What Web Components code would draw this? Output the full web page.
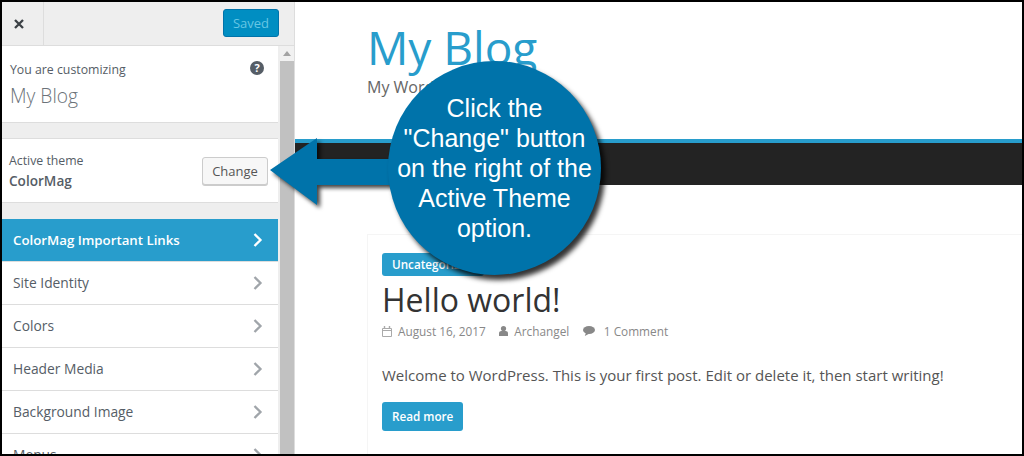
<!DOCTYPE html>
<html>
<head>
<meta charset="utf-8">
<title>Customizer</title>
<style>
  html, body { margin: 0; height: 100%; overflow: hidden; background: #000; }
  body { padding: 2px; box-sizing: border-box; font-family: "Open Sans", sans-serif; }
</style>
</head>
<body>
<customizer-frame>
  <customizer-sidebar slot="side">
    <customizer-row active>ColorMag Important Links</customizer-row>
    <customizer-row>Site Identity</customizer-row>
    <customizer-row>Colors</customizer-row>
    <customizer-row>Header Media</customizer-row>
    <customizer-row>Background Image</customizer-row>
    <customizer-row>Menus</customizer-row>
  </customizer-sidebar>
  <blog-preview slot="main"></blog-preview>
  <tutorial-callout slot="over">Click the<br>"Change" button<br>on the right of the<br>Active Theme<br>option.</tutorial-callout>
</customizer-frame>

<script>
class CustomizerFrame extends HTMLElement {
  constructor() {
    super()
    this.attachShadow({ mode: 'open' }).innerHTML = `
      <style>
        :host { display: flex; position: relative; height: 452px; width: 1020px; background: #fff; overflow: hidden; }
        .side { flex: 0 0 293px; display: flex; }
        .main { flex: 1; min-width: 0; display: flex; }
      </style>
      <div class="side"><slot name="side"></slot></div>
      <div class="main"><slot name="main"></slot></div>
      <slot name="over"></slot>`
  }
}

class CustomizerSidebar extends HTMLElement {
  constructor() {
    super()
    this.attachShadow({ mode: 'open' }).innerHTML = `
      <style>
        :host { display: flex; flex-direction: column; width: 293px; box-sizing: border-box; background: #eee; border-right: 1px solid #ddd; color: #555d66; }
        header { flex: 0 0 43px; display: flex; justify-content: space-between; border-bottom: 1px solid #ddd; }
        .close { width: 42px; box-sizing: border-box; padding-left: 12px; border-right: 1px solid #ddd; display: flex; align-items: center; }
        .saved { width: 56px; height: 28px; margin: 7px 15px 0 0; box-sizing: border-box; background: #008ec2; border: 1px solid #0073aa; border-radius: 3px; color: #66c6e4; font-size: 13px; line-height: 26px; text-align: center; }
        .body { flex: 1; display: flex; min-height: 0; }
        .panel { flex: 0 0 276px; display: flex; flex-direction: column; min-width: 0; overflow: hidden; }
        .bar { flex: 1; margin-left: 2px; background: #f1f1f1; position: relative; display: flex; flex-direction: column; align-items: stretch; }
        .up { height: 15px; display: flex; align-items: center; justify-content: center; }
        .up i { border: 4px solid transparent; border-top: 0; border-bottom: 5px solid #a3a3a3; }
        .thumb { flex: 1; background: #c1c1c1; }
        .intro { height: 76px; flex: none; background: #fff; border-bottom: 1px solid #ddd; position: relative; padding-left: 8px; }
        .small { font-size: 12.3px; line-height: 18px; }
        .intro .small { padding-top: 15px; }
        .name { font-size: 19.2px; font-weight: 300; line-height: 28px; margin-top: 3px; color: #6b7279; }
        .help { position: absolute; right: 14px; top: 15px; }
        .gap { height: 15px; flex: none; }
        .gap.low { height: 16px; }
        .theme { height: 63px; flex: none; background: #fff; border-top: 1px solid #ddd; border-bottom: 1px solid #ddd; display: flex; justify-content: space-between; align-items: center; padding: 0 10px 0 7px; }
        .theme .small { padding-top: 2px; }
        .theme b { display: block; font-size: 13.6px; font-weight: 600; line-height: 20px; margin-top: 1px; }
        .change { width: 66px; height: 28px; box-sizing: border-box; background: #f7f7f7; border: 1px solid #ccc; border-radius: 3px; box-shadow: 0 1px 0 #ccc; font-size: 13px; line-height: 26px; text-align: center; color: #555; }
      </style>
      <header>
        <div class="close">
          <svg width="10" height="10" viewBox="0 0 10 10"><path d="M1 1l8 8M9 1l-8 8" stroke="#3b4045" stroke-width="2.3" fill="none"/></svg>
        </div>
        <div class="saved">Saved</div>
      </header>
      <div class="body">
        <div class="panel">
          <div class="intro">
            <div class="small">You are customizing</div>
            <div class="name">My Blog</div>
            <svg class="help" width="14" height="14" viewBox="0 0 14 14"><circle cx="7" cy="7" r="7" fill="#555d66"/><text x="7" y="11" text-anchor="middle" font-family="Open Sans" font-weight="700" font-size="11" fill="#fff">?</text></svg>
          </div>
          <div class="gap"></div>
          <div class="theme">
            <div class="small">Active theme<b>ColorMag</b></div>
            <div class="change">Change</div>
          </div>
          <div class="gap low"></div>
          <slot></slot>
        </div>
        <div class="bar"><div class="up"><i></i></div><div class="thumb"></div></div>
      </div>`
  }
}

class CustomizerRow extends HTMLElement {
  constructor() {
    super()
    this.attachShadow({ mode: 'open' }).innerHTML = `
      <style>
        :host { display: flex; flex: none; height: 42px; align-items: center; justify-content: space-between; padding: 0 15px 0 11px; background: #fff; border-bottom: 1px solid #ddd; color: #555d66; font-size: 13.8px; }
        :host([active]) { background: #289dcc; color: #fff; font-size: 13.25px; font-weight: 600; }
        svg { stroke: #a0a5aa; }
        :host([active]) svg { stroke: #fff; }
        .label { display: block; margin-top: -1px; }
        :host([active]) .label { margin-top: 0; }
      </style>
      <span class="label"><slot></slot></span>
      <svg width="10" height="14" viewBox="0 0 10 14"><path d="M1.5 1l6 6-6 6" stroke-width="2.3" fill="none"/></svg>`
  }
}

class BlogPreview extends HTMLElement {
  constructor() {
    super()
    this.attachShadow({ mode: 'open' }).innerHTML = `
      <style>
        :host { display: block; flex: 1; min-width: 0; background: #fff; color: #555; }
        .brand { padding-left: 72px; height: 137px; }
        h1 { margin: 0; padding-top: 16px; font-size: 46px; line-height: 58px; font-weight: 400; color: #289dcc; }
        .tag { font-size: 16px; line-height: 20px; margin-top: 1px; color: #666; }
        nav { height: 42px; background: #232323; border-top: 4px solid #289dcc; }
        .wrap { padding: 49px 0 0 72px; }
        .card { border: 1px solid #f5f5f5; border-right: 0; border-bottom: 0; padding: 17px 0 0 14px; height: 300px; box-sizing: border-box; }
        .cat { display: inline-block; background: #289dcc; color: #fff; font-size: 11.7px; font-weight: 600; line-height: 23px; padding: 0 10px; border-radius: 3px; }
        h2 { margin: 4px 0 0; font-size: 32px; font-weight: 400; line-height: 40px; color: #333; }
        .meta { display: flex; align-items: center; font-size: 11.8px; color: #888; margin-top: 1px; height: 20px; }
        .meta span { display: flex; align-items: center; gap: 6px; margin-right: 13.5px; }
        p { margin: 22px 0 0; font-size: 15px; line-height: 24px; color: #555; }
        .more { display: inline-block; margin-top: 15px; background: #289dcc; color: #fff; font-size: 11.7px; font-weight: 600; line-height: 29px; padding: 0 10px; border-radius: 3px; }
      </style>
      <div class="brand">
        <h1>My Blog</h1>
        <div class="tag">My WordPress Blog</div>
      </div>
      <nav></nav>
      <div class="wrap">
        <article class="card">
          <span class="cat">Uncategorized</span>
          <h2>Hello world!</h2>
          <div class="meta">
            <span>
              <svg width="10" height="11" viewBox="0 0 10 11"><path d="M.5 2.5h9v8h-9zM.5 4.5h9" fill="none" stroke="#aaa"/><path d="M2.5 0v2.5M7.5 0v2.5" stroke="#aaa" stroke-width="1.4"/></svg>
              August 16, 2017
            </span>
            <span>
              <svg width="9" height="10" viewBox="0 0 9 10"><circle cx="4.5" cy="2.6" r="2.6" fill="#888"/><path d="M0 10V7.4C0 5.8 1.2 5 2.4 5h4.2C7.8 5 9 5.8 9 7.4V10z" fill="#888"/></svg>
              Archangel
            </span>
            <span>
              <svg width="12" height="10" viewBox="0 0 12 10"><ellipse cx="6" cy="4" rx="6" ry="4" fill="#888"/><path d="M3 6.5L1.8 10 6.5 7.5z" fill="#888"/></svg>
              &nbsp;1 Comment
            </span>
          </div>
          <p>Welcome to WordPress. This is your first post. Edit or delete it, then start writing!</p>
          <span class="more">Read more</span>
        </article>
      </div>`
  }
}

class TutorialCallout extends HTMLElement {
  constructor() {
    super()
    this.attachShadow({ mode: 'open' }).innerHTML = `
      <style>
        :host { display: block; position: absolute; left: 0; top: 0; width: 0; height: 0; }
        svg { position: absolute; left: 262px; top: 130px; filter: drop-shadow(3px 3px 2px rgba(0,0,0,.75)); }
        .circle { position: absolute; left: 386px; top: 59px; width: 213px; height: 214px; border-radius: 50%; background: #0073aa; box-shadow: 4px 5px 5px rgba(0,0,0,.8); display: flex; align-items: center; justify-content: center; text-align: center; color: #fff; font: 25px/30px "Liberation Sans", Arial, sans-serif; }
      </style>
      <svg width="150" height="90" viewBox="0 0 150 90"><path d="M6 38L53 6V27H150V53H53V73z" fill="#0073aa"/></svg>
      <div class="circle"><div><slot></slot></div></div>`
  }
}

customElements.define('customizer-frame', CustomizerFrame)
customElements.define('customizer-sidebar', CustomizerSidebar)
customElements.define('customizer-row', CustomizerRow)
customElements.define('blog-preview', BlogPreview)
customElements.define('tutorial-callout', TutorialCallout)
</script>
</body>
</html>
